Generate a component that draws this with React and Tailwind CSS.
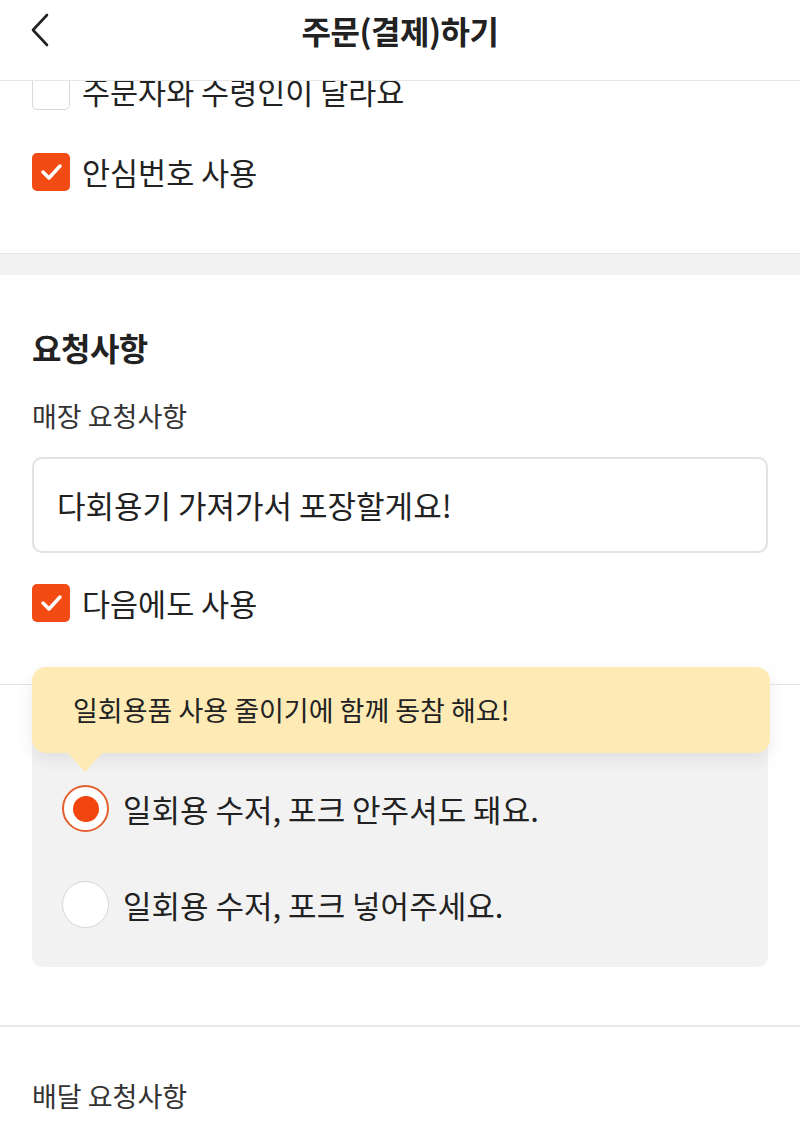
import React from "react";

const font = "font-['Noto_Sans_CJK_KR','Noto_Sans',sans-serif]";

function CheckBox({ checked }) {
  if (!checked) {
    return <div className="w-[38px] h-[38px] shrink-0 rounded-[5px] border-[1.5px] border-[#d9d9d9] bg-white" />;
  }
  return (
    <div className="w-[38px] h-[38px] shrink-0 rounded-[5px] bg-[#f24b14] flex items-center justify-center">
      <svg width="38" height="38" viewBox="0 0 38 38">
        <path d="M11 19 L17 25 L28 13" fill="none" stroke="#fff" strokeWidth="3.5" strokeLinecap="round" strokeLinejoin="round" />
      </svg>
    </div>
  );
}

function CheckRow({ checked, label, className = "" }) {
  return (
    <div className={`flex items-center gap-[12px] h-[38px] ${className}`}>
      <CheckBox checked={checked} />
      <span className="text-[30.5px] leading-[38px] text-[#222]">{label}</span>
    </div>
  );
}

function Radio({ checked }) {
  if (checked) {
    return (
      <div className="w-[47px] h-[47px] shrink-0 rounded-full border-2 border-[#e4612f] bg-white flex items-center justify-center">
        <div className="w-[26px] h-[26px] rounded-full bg-[#f2450f]" />
      </div>
    );
  }
  return <div className="w-[47px] h-[47px] shrink-0 rounded-full border border-[#d6d6d6] bg-white" />;
}

export default function App() {
  return (
    <div className={`${font} w-[800px] h-[1132px] overflow-hidden bg-white text-[#222]`}>
      {/* Header */}
      <div className="relative z-10 h-[81px] bg-white border-b border-[#e6e6e6]">
        <div className="h-[60px] grid grid-cols-[80px_1fr_80px] items-center">
          <div className="pl-[30px] flex items-center">
            <svg width="22" height="34" viewBox="0 0 22 34">
              <path d="M17 2 L3 17 L17 32" fill="none" stroke="#222" strokeWidth="2.6" strokeLinecap="round" strokeLinejoin="round" />
            </svg>
          </div>
          <div className="text-center text-[32px] font-bold leading-[40px] tracking-[-0.5px]">주문(결제)하기</div>
          <div />
        </div>
      </div>

      {/* Content */}
      <div>
        <div className="px-[32px]">
          <CheckRow checked={false} label="주문자와 수령인이 달라요" className="-mt-[9px]" />
          <CheckRow checked={true} label="안심번호 사용" className="mt-[43px]" />
        </div>

        <div className="mt-[62px] h-[22px] bg-[#f2f2f2] border-t border-[#e8e8e8]" />

        <div className="px-[32px] pt-[52px]">
          <div className="text-[32px] font-bold leading-[40px] h-[40px] tracking-[-0.5px]">요청사항</div>
          <div className="mt-[31px] text-[27px] leading-[36px] h-[36px] text-[#333]">매장 요청사항</div>
          <div className="mt-[23px] h-[96px] border-2 border-[#e2e2e2] rounded-[10px] flex items-center pl-[23px] text-[31px] leading-[40px]">
            다회용기 가져가서 포장할게요!
          </div>
          <CheckRow checked={true} label="다음에도 사용" className="mt-[31px]" />
        </div>

        <div className="mt-[62px] h-px bg-[#e5e5e5]" />

        <div className="relative pt-[20px]">
          <div className="mx-[32px] pt-[80px] pb-[39px] rounded-[10px] bg-[#f2f2f2]">
            <div className="flex items-center gap-[14px] pl-[30px] h-[47px]">
              <Radio checked={true} />
              <span className="text-[31px] leading-[40px]">일회용 수저, 포크 안주셔도 돼요.</span>
            </div>
            <div className="mt-[49px] flex items-center gap-[14px] pl-[30px] h-[47px]">
              <Radio checked={false} />
              <span className="text-[31px] leading-[40px]">일회용 수저, 포크 넣어주세요.</span>
            </div>
          </div>

          <div className="absolute top-[-18px] left-[32px] right-[30px] h-[86px] rounded-[14px] bg-[#fdeab5] shadow-[0_6px_18px_rgba(0,0,0,0.08)] flex items-center pl-[41px]">
            <span className="text-[27px] leading-[34px] text-[#222]">일회용품 사용 줄이기에 함께 동참 해요!</span>
            <div className="absolute left-[36px] top-[86px] w-0 h-0 border-l-[17px] border-r-[17px] border-t-[19px] border-l-transparent border-r-transparent border-t-[#fdeab5]" />
          </div>
        </div>

        <div className="mt-[58px] h-[2px] bg-[#e8e8e8]" />

        <div className="px-[32px] mt-[51px] text-[27px] leading-[36px] text-[#333]">배달 요청사항</div>
      </div>
    </div>
  );
}
